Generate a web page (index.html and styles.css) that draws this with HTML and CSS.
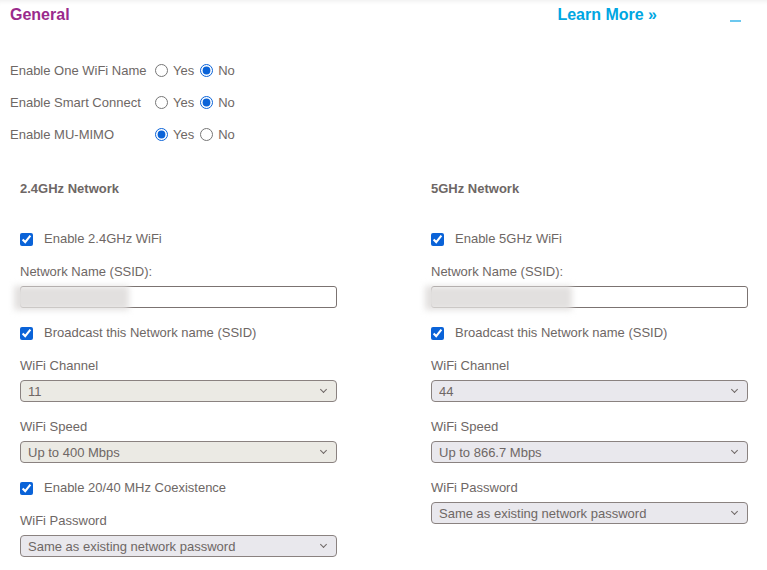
FILE: index.html
```html
<!DOCTYPE html>
<html lang="en">
<head>
    <meta charset="UTF-8">
    <meta name="viewport" content="width=device-width, initial-scale=1.0">
    <title>Wireless Settings</title>
    <link rel="stylesheet" href="styles.css">
</head>
<body>
    <div class="header">
        <div class="section-name">General</div>
        <a class="learn-more" href="#">Learn More &raquo;</a>
        <span class="collapse"></span>
    </div>

    <!-- General options -->
    <div class="general">
        <div class="radio-row">
            <span class="radio-label">Enable One WiFi Name</span>
            <label class="radio"><input type="radio" name="onename"> Yes</label>
            <label class="radio"><input type="radio" name="onename" checked> No</label>
        </div>
        <div class="radio-row">
            <span class="radio-label">Enable Smart Connect</span>
            <label class="radio"><input type="radio" name="smart"> Yes</label>
            <label class="radio"><input type="radio" name="smart" checked> No</label>
        </div>
        <div class="radio-row">
            <span class="radio-label">Enable MU-MIMO</span>
            <label class="radio"><input type="radio" name="mumimo" checked> Yes</label>
            <label class="radio"><input type="radio" name="mumimo"> No</label>
        </div>
    </div>

    <div class="networks">
        <!-- 2.4GHz -->
        <div class="network">
            <div class="network-title">2.4GHz Network</div>
            <label class="check"><input type="checkbox" checked> Enable 2.4GHz WiFi</label>
            <div class="field">
                <div class="field-label">Network Name (SSID):</div>
                <div class="ssid-wrap">
                    <input type="text" class="text-input" value="">
                    <div class="ssid-blur left"></div>
                </div>
            </div>
            <label class="check"><input type="checkbox" checked> Broadcast this Network name (SSID)</label>
            <div class="field">
                <div class="field-label">WiFi Channel</div>
                <div class="select-wrap">
                    <select class="select beige"><option>11</option></select>
                </div>
            </div>
            <div class="field">
                <div class="field-label">WiFi Speed</div>
                <div class="select-wrap">
                    <select class="select beige"><option>Up to 400 Mbps</option></select>
                </div>
            </div>
            <label class="check"><input type="checkbox" checked> Enable 20/40 MHz Coexistence</label>
            <div class="field">
                <div class="field-label">WiFi Password</div>
                <div class="select-wrap">
                    <select class="select"><option>Same as existing network password</option></select>
                </div>
            </div>
        </div>

        <!-- 5GHz -->
        <div class="network">
            <div class="network-title">5GHz Network</div>
            <label class="check"><input type="checkbox" checked> Enable 5GHz WiFi</label>
            <div class="field">
                <div class="field-label">Network Name (SSID):</div>
                <div class="ssid-wrap">
                    <input type="text" class="text-input" value="">
                    <div class="ssid-blur right"></div>
                </div>
            </div>
            <label class="check"><input type="checkbox" checked> Broadcast this Network name (SSID)</label>
            <div class="field">
                <div class="field-label">WiFi Channel</div>
                <div class="select-wrap">
                    <select class="select"><option>44</option></select>
                </div>
            </div>
            <div class="field">
                <div class="field-label">WiFi Speed</div>
                <div class="select-wrap">
                    <select class="select"><option>Up to 866.7 Mbps</option></select>
                </div>
            </div>
            <div class="field">
                <div class="field-label">WiFi Password</div>
                <div class="select-wrap">
                    <select class="select"><option>Same as existing network password</option></select>
                </div>
            </div>
        </div>
    </div>
</body>
</html>
```

FILE: styles.css
```css
body {
    margin: 0;
    font-family: "Liberation Sans", Arial, sans-serif;
    font-size: 13px;
    color: #6e6765;
    background-color: white;
}
.header {
    display: flex;
    align-items: center;
    height: 29px;
    padding: 0 10px;
    box-shadow: inset 0px 5px 5px -4px rgba(0, 0, 0, 0.08);
}
.section-name {
    font-size: 16px;
    font-weight: bold;
    color: #9a2a8c;
    flex: 1;
}
.learn-more {
    font-size: 16px;
    font-weight: bold;
    color: #00a6e2;
    text-decoration: none;
    margin-right: 73px;
}
.collapse {
    width: 11px;
    height: 2px;
    background-color: #6cc8ef;
    margin-right: 16px;
    position: relative;
    top: 6px;
}
.general {
    padding: 25px 10px 0 10px;
}
.radio-row {
    display: flex;
    align-items: center;
    height: 32px;
}
.radio-label {
    width: 144px;
}
.radio {
    display: flex;
    align-items: center;
    margin-right: 5px;
}
.radio input {
    width: 13px;
    height: 13px;
    margin: 0 5px 0 1px;
    accent-color: #0a63d8;
}
.networks {
    display: flex;
    justify-content: space-between;
    padding: 31px 19px 0 20px;
}
.network {
    width: 317px;
    display: flex;
    flex-direction: column;
    gap: 17px;
}
.network-title {
    font-weight: bold;
    line-height: 16px;
    margin-bottom: 17px;
}
.check {
    display: flex;
    align-items: center;
    line-height: 16px;
}
.check input {
    width: 13px;
    height: 13px;
    margin: 0 11px 0 0;
    accent-color: #0a63d8;
}
.field {
    display: flex;
    flex-direction: column;
    gap: 6px;
}
.field-label {
    line-height: 16px;
}
.ssid-wrap {
    position: relative;
}
.text-input {
    box-sizing: border-box;
    width: 100%;
    height: 22px;
    border: 1px solid #7b7371;
    border-radius: 3px;
    background: white;
}
.ssid-blur {
    position: absolute;
    top: 0;
    height: 24px;
    background: #e2e0df;
    filter: blur(3px);
}
.ssid-blur.left {
    left: -6px;
    width: 115px;
}
.ssid-blur.right {
    left: -6px;
    width: 147px;
}
.select-wrap {
    position: relative;
}
.select-wrap::after {
    content: "";
    position: absolute;
    right: 11px;
    top: 7px;
    width: 4px;
    height: 4px;
    border-right: 1px solid #6e6765;
    border-bottom: 1px solid #6e6765;
    transform: rotate(45deg);
    pointer-events: none;
}
.select {
    appearance: none;
    box-sizing: border-box;
    width: 100%;
    height: 22px;
    padding: 0 7px;
    font-family: "Liberation Sans", Arial, sans-serif;
    font-size: 13px;
    color: #6e6765;
    background-color: #e9e8ed;
    border: 1px solid #8a8280;
    border-radius: 4px;
}
.select.beige {
    background-color: #ebeae4;
}
```
